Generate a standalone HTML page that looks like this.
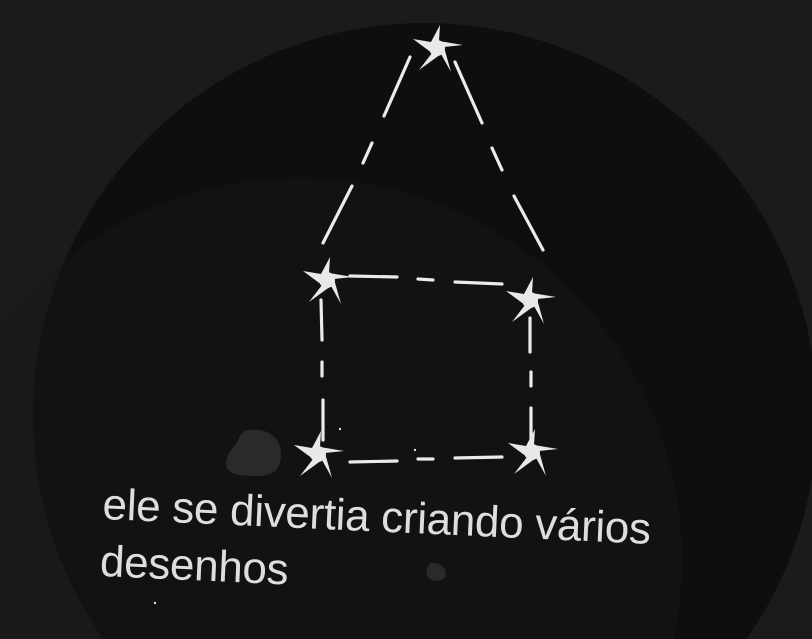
<!DOCTYPE html>
<html><head><meta charset="utf-8"><style>
html,body{margin:0;padding:0;background:#1b1b1c;width:812px;height:639px;overflow:hidden;position:relative}
svg{position:absolute;left:0;top:0}
.t{position:absolute;left:104px;top:476px;width:600px;height:120px;font-family:"Liberation Sans",sans-serif;font-weight:normal;color:#dedede;font-size:44px;line-height:57px;transform:rotate(2.6deg);transform-origin:0 0;white-space:nowrap;letter-spacing:-0.3px}
</style></head><body>
<svg width="812" height="639" viewBox="0 0 812 639">
<defs>
<g id="s" fill="#e8e8e8"><circle r="8"/><path d="M3,-23 L2,-7 L26,-3 L7,-1 L14,24 L4,6 L-18,22 L-5,5 L-24,-9 L-6,-6 Z"/></g>
</defs>
<rect width="812" height="639" fill="#1b1b1c"/>
<circle cx="425" cy="415" r="392" fill="#0e0e0f"/>
<clipPath id="c"><circle cx="425" cy="415" r="392"/></clipPath>
<circle cx="300" cy="560" r="382" fill="#19191a"/>
<circle cx="300" cy="560" r="382" fill="#121214" clip-path="url(#c)"/>
<g stroke="#ebebeb" stroke-width="3.2" stroke-linecap="round" fill="none">
<line x1="410" y1="57" x2="384" y2="116"/>
<line x1="372" y1="143" x2="363" y2="163"/>
<line x1="352" y1="186" x2="323" y2="243"/>
<line x1="455" y1="62" x2="482" y2="123"/>
<line x1="492" y1="148" x2="502" y2="170"/>
<line x1="514" y1="196" x2="543" y2="250"/>
<line x1="350" y1="276" x2="397" y2="277"/>
<line x1="418" y1="279" x2="433" y2="280"/>
<line x1="455" y1="282" x2="502" y2="284"/>
<line x1="350" y1="462" x2="397" y2="461"/>
<line x1="418" y1="459" x2="433" y2="459"/>
<line x1="455" y1="458" x2="502" y2="457"/>
<line x1="321" y1="300" x2="322" y2="340"/>
<line x1="322" y1="362" x2="322" y2="376"/>
<line x1="323" y1="400" x2="323" y2="440"/>
<line x1="530" y1="318" x2="530" y2="352"/>
<line x1="531" y1="372" x2="531" y2="386"/>
<line x1="531" y1="408" x2="531" y2="440"/>
</g>
<use href="#s" x="437" y="48"/>
<use href="#s" x="327" y="280"/>
<use href="#s" x="530" y="300"/>
<use href="#s" x="318" y="454"/>
<use href="#s" x="532" y="452"/>
<path d="M250,430 C268,428 282,438 281,455 C280,472 272,476 255,476 C238,476 225,474 226,462 C227,452 236,446 238,440 C241,433 244,430 250,430 Z" fill="#2a2a2b"/>
<path d="M430,563 C438,562 446,566 446,573 C446,580 438,582 432,580 C426,578 424,570 430,563 Z" fill="#2a2a2b"/>
<circle cx="340" cy="429" r="1.2" fill="#ddd"/>
<circle cx="415" cy="450" r="1.2" fill="#ddd"/>
<circle cx="155" cy="603" r="1.2" fill="#ddd"/>
</svg>
<div class="t">ele se divertia criando vários<br>desenhos</div>
</body></html>
